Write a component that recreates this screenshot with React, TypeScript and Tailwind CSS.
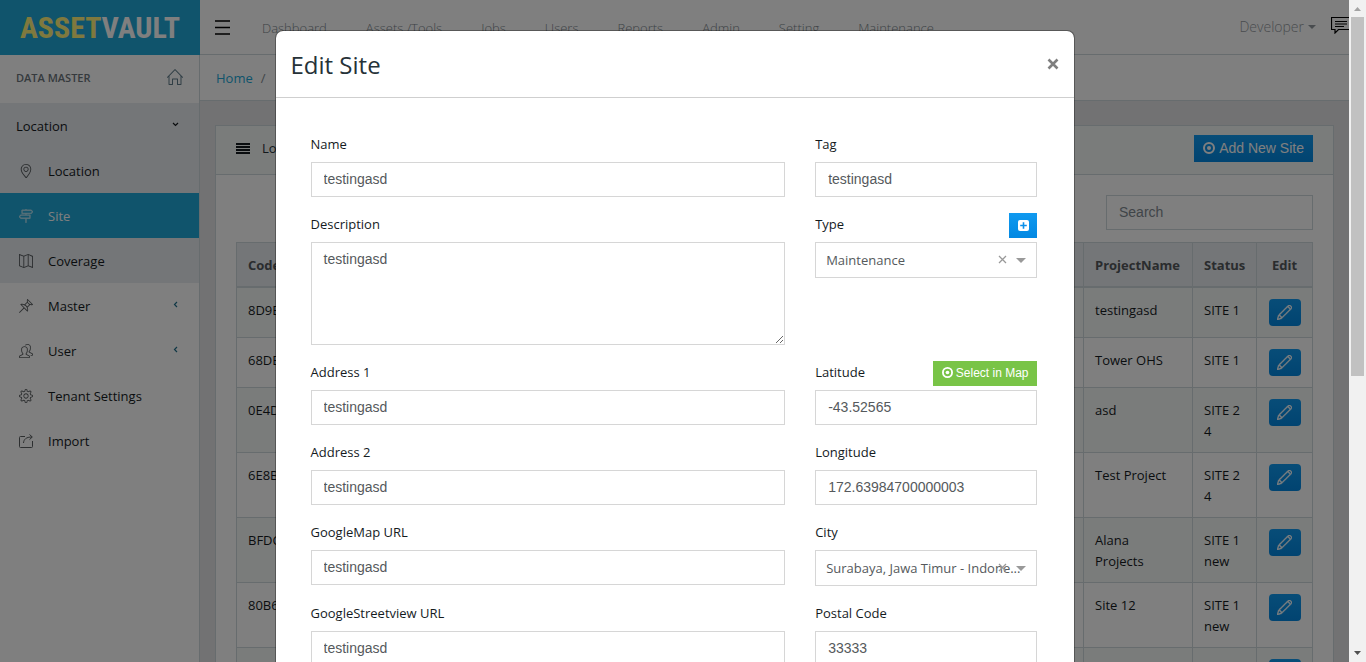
import React from "react";
import {
  SlDirections,
  SlHome,
  SlLocationPin,
  SlMap,
  SlPencil,
  SlPeople,
  SlPin,
  SlSettings,
} from "react-icons/sl";

const topLinks = ["Dashboard", "Assets /Tools", "Jobs", "Users", "Reports", "Admin", "Setting", "Maintenance"];

const sites = [
  { code: "8D9E", project: "testingasd", status: "SITE 1" },
  { code: "68DE", project: "Tower OHS", status: "SITE 1" },
  { code: "0E4D", project: "asd", status: "SITE 2 4" },
  { code: "6E8B", project: "Test Project", status: "SITE 2 4" },
  { code: "BFDC", project: "Alana\nProjects", status: "SITE 1 new" },
  { code: "80B6", project: "Site 12", status: "SITE 1 new" },
  { code: "", project: "", status: "" },
];

function TargetIcon({ className }: { className: string }) {
  return (
    <svg viewBox="0 0 12 12" className={className} aria-hidden="true">
      <circle cx="6" cy="6" r="5" fill="none" stroke="currentColor" strokeWidth="2" />
      <circle cx="6" cy="6" r="2" fill="currentColor" />
    </svg>
  );
}

function ImportIcon() {
  return (
    <svg viewBox="0 0 14 14" className="size-3.5" fill="none" stroke="currentColor" strokeWidth="1" aria-hidden="true">
      <path d="M6 2.500H1.500a1 1 0 0 0-1 1v9a1 1 0 0 0 1 1h11a1 1 0 0 0 1-1V7" />
      <path d="M4.500 9c.3-3.600 2.500-6 8.500-6M10.500 .500L13.300 3l-2.800 2.600" />
    </svg>
  );
}

function Chevron({ d, className }: { d: string; className: string }) {
  return (
    <svg viewBox="0 0 7 7" className={`mb-1 size-[7px] ${className}`} aria-hidden="true">
      <path d={d} fill="none" stroke="currentColor" strokeWidth="1.200" />
    </svg>
  );
}

function NavItem({
  icon,
  label,
  tone,
  arrow,
}: {
  icon: React.ReactNode;
  label: string;
  tone: string;
  arrow?: boolean;
}) {
  return (
    <a href="#" className={`flex h-[45px] items-center pt-0.5 pr-5 pl-[19px] ${tone}`}>
      <span className="mr-[15px] pb-0.5 text-sm opacity-70">{icon}</span>
      <span className="flex-1">{label}</span>
      {arrow && <Chevron d="M5 1L2.500 3.500L5 6" className="text-[#20708d]" />}
    </a>
  );
}

function Sidebar() {
  return (
    <aside className="w-[200px] shrink-0 border-r border-[#cfd8dc] bg-white text-[#151b1e]">
      <div className="flex h-12 items-center justify-between px-4 pb-1 text-[11px] font-semibold text-[#607d8b]">
        <span className="text-[#6b747b]">DATA MASTER</span>
        <SlHome className="size-4" />
      </div>
      <nav>
        <div className="bg-[#e9ecf0]">
          <a href="#" className="flex h-[45px] items-center justify-between pt-0.5 pr-5 pl-4">
            <span>Location</span>
            <Chevron d="M1 2L3.500 4.500L6 2" className="text-[#151b1e]" />
          </a>
          <NavItem icon={<SlLocationPin />} label="Location" tone="" />
          <NavItem icon={<SlDirections strokeWidth={30} stroke="currentColor" />} label="Site" tone="bg-[#20a8d8] text-white" />
          <NavItem icon={<SlMap />} label="Coverage" tone="" />
        </div>
        <NavItem icon={<SlPin />} label="Master" tone="" arrow />
        <NavItem icon={<SlPeople />} label="User" tone="" arrow />
        <NavItem icon={<SlSettings />} label="Tenant Settings" tone="" />
        <NavItem icon={<ImportIcon />} label="Import" tone="" />
      </nav>
    </aside>
  );
}

function Header() {
  return (
    <header className="flex h-[55px] items-center border-b border-[#cfd8dc] bg-white">
      <a
        href="#"
        className="flex h-[55px] w-[200px] shrink-0 items-center justify-center bg-[#20a8d8] font-['Roboto_Condensed',Roboto,'Liberation_Sans',sans-serif] text-[30px] font-bold text-white"
      >
        <span className="text-[#fff27d]">ASSET</span>
        <span>VAULT</span>
      </a>
      <button type="button" aria-label="Toggle menu" className="ml-[15px] w-[15px] text-black">
        <svg viewBox="0 0 15 15" className="size-[15px]" aria-hidden="true">
          <path d="M0 1h15M0 7.500h15M0 14h15" stroke="currentColor" strokeWidth="1.400" />
        </svg>
      </button>
      <nav className="ml-8 flex flex-1 gap-[39px] pt-0.5 font-light text-[#7c868d]">
        {topLinks.map((link) => (
          <a key={link} href="#" className="whitespace-nowrap">
            {link}
          </a>
        ))}
      </nav>
      <button type="button" className="mr-[15px] flex items-center gap-1 text-sm font-light text-[#93999e]">
        Developer
        <svg viewBox="0 0 8 4" className="h-1 w-2" aria-hidden="true">
          <path d="M0 0h8L4 4z" fill="currentColor" />
        </svg>
      </button>
      <svg viewBox="0 0 18 18" className="-mt-1 h-[18px] w-[18px] text-black" aria-hidden="true">
        <path d="M18 1.500H.500v12H4v3.500l3.500-3.500H18" fill="none" stroke="currentColor" strokeWidth="1.200" />
        <path d="M4 5.500h12M4 8h12M4 10.500h9" stroke="currentColor" strokeWidth="1.100" />
      </svg>
    </header>
  );
}

function SiteTable() {
  return (
    <table className="w-full table-fixed border-collapse text-left text-[#151b1e]">
      <colgroup>
        <col className="w-[120px]" />
        <col />
        <col className="w-[109px]" />
        <col className="w-16" />
        <col className="w-14" />
      </colgroup>
      <thead>
        <tr className="h-11 border border-b-2 border-[#cfd8dc] bg-[#e9ecf0] text-[#55595c]">
          {["Code", "", "ProjectName", "Status", "Edit"].map((title, i) => (
            <th key={i} className={`border-x border-[#cfd8dc] px-[11px] pt-0.5 font-bold ${i === 4 ? "text-center" : ""}`}>
              {title}
            </th>
          ))}
        </tr>
      </thead>
      <tbody className="align-top">
        {sites.map((site, i) => (
          <tr key={i} className="border border-[#cfd8dc] odd:bg-[#f5f8f7]">
            <td className="border-x border-[#cfd8dc] px-[11px] pt-3 pb-2.5">{site.code}</td>
            <td className="border-x border-[#cfd8dc]" />
            <td className="border-x border-[#cfd8dc] px-[11px] pt-3 pb-2.5 whitespace-pre-line">{site.project}</td>
            <td className="border-x border-[#cfd8dc] px-[11px] pt-3 pb-2.5">{site.status}</td>
            <td className="border-x border-[#cfd8dc] py-[11px]">
              <button
                type="button"
                aria-label="Edit site"
                className="mx-auto flex h-[27px] w-8 items-center justify-center rounded bg-linear-to-b from-[#109af0] to-[#0388e2] text-white"
              >
                <SlPencil className="size-[15px]" stroke="currentColor" strokeWidth={30} />
              </button>
            </td>
          </tr>
        ))}
      </tbody>
    </table>
  );
}

function Page() {
  return (
    <div className="flex h-full flex-col">
      <Header />
      <div className="flex min-h-0 flex-1">
        <Sidebar />
        <main className="min-w-0 flex-1">
          <div className="flex h-[46px] items-center gap-2 border-b border-[#cfd8dc] bg-white px-4 pt-0.5">
            <a href="#" className="text-[#20a8d8]">
              Home
            </a>
            <span className="text-[#818a91]">/</span>
          </div>
          <section className="mx-[15px] mt-6 border border-[#cfd8dc] bg-white">
            <div className="flex h-[49px] items-center border-b border-[#cfd8dc] bg-[#f5f8f7] px-5 pb-1">
              <svg viewBox="0 0 14 11" className="mr-3 h-[11px] w-3.5 text-[#151b1e]" aria-hidden="true">
                <path d="M0 1h14M0 4h14M0 7h14M0 10h14" stroke="currentColor" strokeWidth="2" />
              </svg>
              <span className="flex-1">Location</span>
              <button
                type="button"
                className="flex h-[27px] items-center gap-1 bg-linear-to-b from-[#109af0] to-[#0388e2] px-[9px] font-['Liberation_Sans',sans-serif] text-sm text-white"
              >
                <TargetIcon className="size-3" />
                Add New Site
              </button>
            </div>
            <div className="p-5">
              <div className="mb-3 flex justify-end">
                <input
                  type="search"
                  aria-label="Search"
                  placeholder="Search"
                  className="h-[35px] w-[207px] border border-[#cfd8dc] px-3 pb-0.5 font-['Liberation_Sans',sans-serif] text-sm placeholder:text-[#818a91]"
                />
              </div>
              <SiteTable />
            </div>
          </section>
        </main>
      </div>
    </div>
  );
}

function Field({
  id,
  label,
  wide,
  action,
  children,
}: {
  id: string;
  label: string;
  wide?: boolean;
  action?: React.ReactNode;
  children: React.ReactNode;
}) {
  return (
    <div className={wide ? "col-span-2" : ""}>
      <div className="flex h-[29px] items-start justify-between">
        <label htmlFor={id} className="leading-[23px] text-[#151b1e]">
          {label}
        </label>
        {action}
      </div>
      {children}
    </div>
  );
}

function TextField({ id, label, value, wide, action }: { id: string; label: string; value: string; wide?: boolean; action?: React.ReactNode }) {
  return (
    <Field id={id} label={label} wide={wide} action={action}>
      <input
        id={id}
        type="text"
        defaultValue={value}
        className="block h-[35px] w-full border border-[#d6d6d6] bg-white px-3 pb-0.5 font-['Liberation_Sans',sans-serif] text-sm text-[#55595c] outline-none"
      />
    </Field>
  );
}

function SelectField({ id, label, value, action }: { id: string; label: string; value: string; action?: React.ReactNode }) {
  return (
    <Field id={id} label={label} action={action}>
      <div className="relative">
        <select
          id={id}
          className="block h-9 w-full appearance-none border border-[#d6d6d6] bg-white px-2.5 text-[#55595c] outline-none"
        >
          <option>{value}</option>
        </select>
        <button type="button" aria-label={`Clear ${label}`} className="absolute top-[13px] right-[30px] text-[#999]">
          <svg viewBox="0 0 9 9" className="size-[9px]" aria-hidden="true">
            <path d="M1 1l7 7M8 1l-7 7" stroke="currentColor" strokeWidth="1.300" />
          </svg>
        </button>
        <svg viewBox="0 0 10 5" className="pointer-events-none absolute top-4 right-[11px] h-[5px] w-2.5 text-[#999]" aria-hidden="true">
          <path d="M0 0h10L5 5z" fill="currentColor" />
        </svg>
      </div>
    </Field>
  );
}

function EditSiteDialog() {
  return (
    <div
      role="dialog"
      aria-labelledby="edit-site-title"
      className="w-[800px] max-w-full rounded-lg border border-black/30 bg-white bg-clip-padding"
    >
      <div className="flex h-[67px] items-center justify-between border-b border-[#cfcfcf] px-[15px]">
        <h4 id="edit-site-title" className="pt-0.5 text-2xl leading-7 font-medium text-[#263238]">
          Edit Site
        </h4>
        <button type="button" aria-label="Close" className="text-[#7f7f7f]">
          <svg viewBox="0 0 12 12" className="size-3" aria-hidden="true">
            <path d="M1.500 1.500l9 9M10.500 1.500l-9 9" stroke="currentColor" strokeWidth="2.600" />
          </svg>
        </button>
      </div>
      <form className="grid grid-cols-3 gap-x-[30px] gap-y-4 py-[35px] pr-9 pl-[35px]">
        <TextField id="name" label="Name" value="testingasd" wide />
        <TextField id="tag" label="Tag" value="testingasd" />
        <Field id="description" label="Description" wide>
          <textarea
            id="description"
            defaultValue="testingasd"
            className="block h-[103px] w-full resize border border-[#d6d6d6] px-3 py-1.5 font-['Liberation_Sans',sans-serif] text-sm text-[#55595c] outline-none"
          />
        </Field>
        <SelectField
          id="type"
          label="Type"
          value="Maintenance"
          action={
            <button
              type="button"
              aria-label="Add type"
              className="flex h-[25px] w-7 items-center justify-center bg-linear-to-b from-[#109af0] to-[#0388e2]"
            >
              <svg viewBox="0 0 11 11" className="size-[11px]" aria-hidden="true">
                <rect width="11" height="11" rx="2" fill="#fff" />
                <path d="M5.500 2.200v6.600M2.200 5.500h6.600" stroke="#0a90ea" strokeWidth="1.600" />
              </svg>
            </button>
          }
        />
        <TextField id="address1" label="Address 1" value="testingasd" wide />
        <TextField
          id="latitude"
          label="Latitude"
          value="-43.52565"
          action={
            <button
              type="button"
              className="flex h-[25px] items-center gap-[3px] bg-[#79c447] px-[9px] pb-0.5 font-['Liberation_Sans',sans-serif] text-xs text-white"
            >
              <TargetIcon className="size-[11px]" />
              Select in Map
            </button>
          }
        />
        <TextField id="address2" label="Address 2" value="testingasd" wide />
        <TextField id="longitude" label="Longitude" value="172.63984700000003" />
        <TextField id="map-url" label="GoogleMap URL" value="testingasd" wide />
        <SelectField id="city" label="City" value="Surabaya, Jawa Timur - Indone..." />
        <TextField id="streetview-url" label="GoogleStreetview URL" value="testingasd" wide />
        <TextField id="postal-code" label="Postal Code" value="33333" />
      </form>
    </div>
  );
}

function ScrollBar() {
  return (
    <div className="flex w-[17px] shrink-0 flex-col items-center bg-[#f1f1f1]" aria-hidden="true">
      <svg viewBox="0 0 17 17" className="size-[17px] shrink-0">
        <path d="M5 11h7L8.500 7z" fill="#a3a3a3" />
      </svg>
      <div className="min-h-0 w-[13px] flex-[359] bg-[#c1c1c1]" />
      <div className="min-h-0 flex-[269]" />
      <svg viewBox="0 0 17 17" className="size-[17px] shrink-0">
        <path d="M5 6h7L8.500 10z" fill="#505050" />
      </svg>
    </div>
  );
}

export default function App() {
  return (
    <div className="flex h-screen overflow-hidden bg-[#e4e5e6] font-['Open_Sans','Noto_Sans',sans-serif] text-[13px] leading-[21px] text-[#263238]">
      <div className="relative min-w-0 flex-1 overflow-hidden">
        <Page />
        <div className="absolute inset-0 flex items-start justify-center overflow-hidden bg-black/50 pt-[30px]">
          <EditSiteDialog />
        </div>
      </div>
      <ScrollBar />
    </div>
  );
}
